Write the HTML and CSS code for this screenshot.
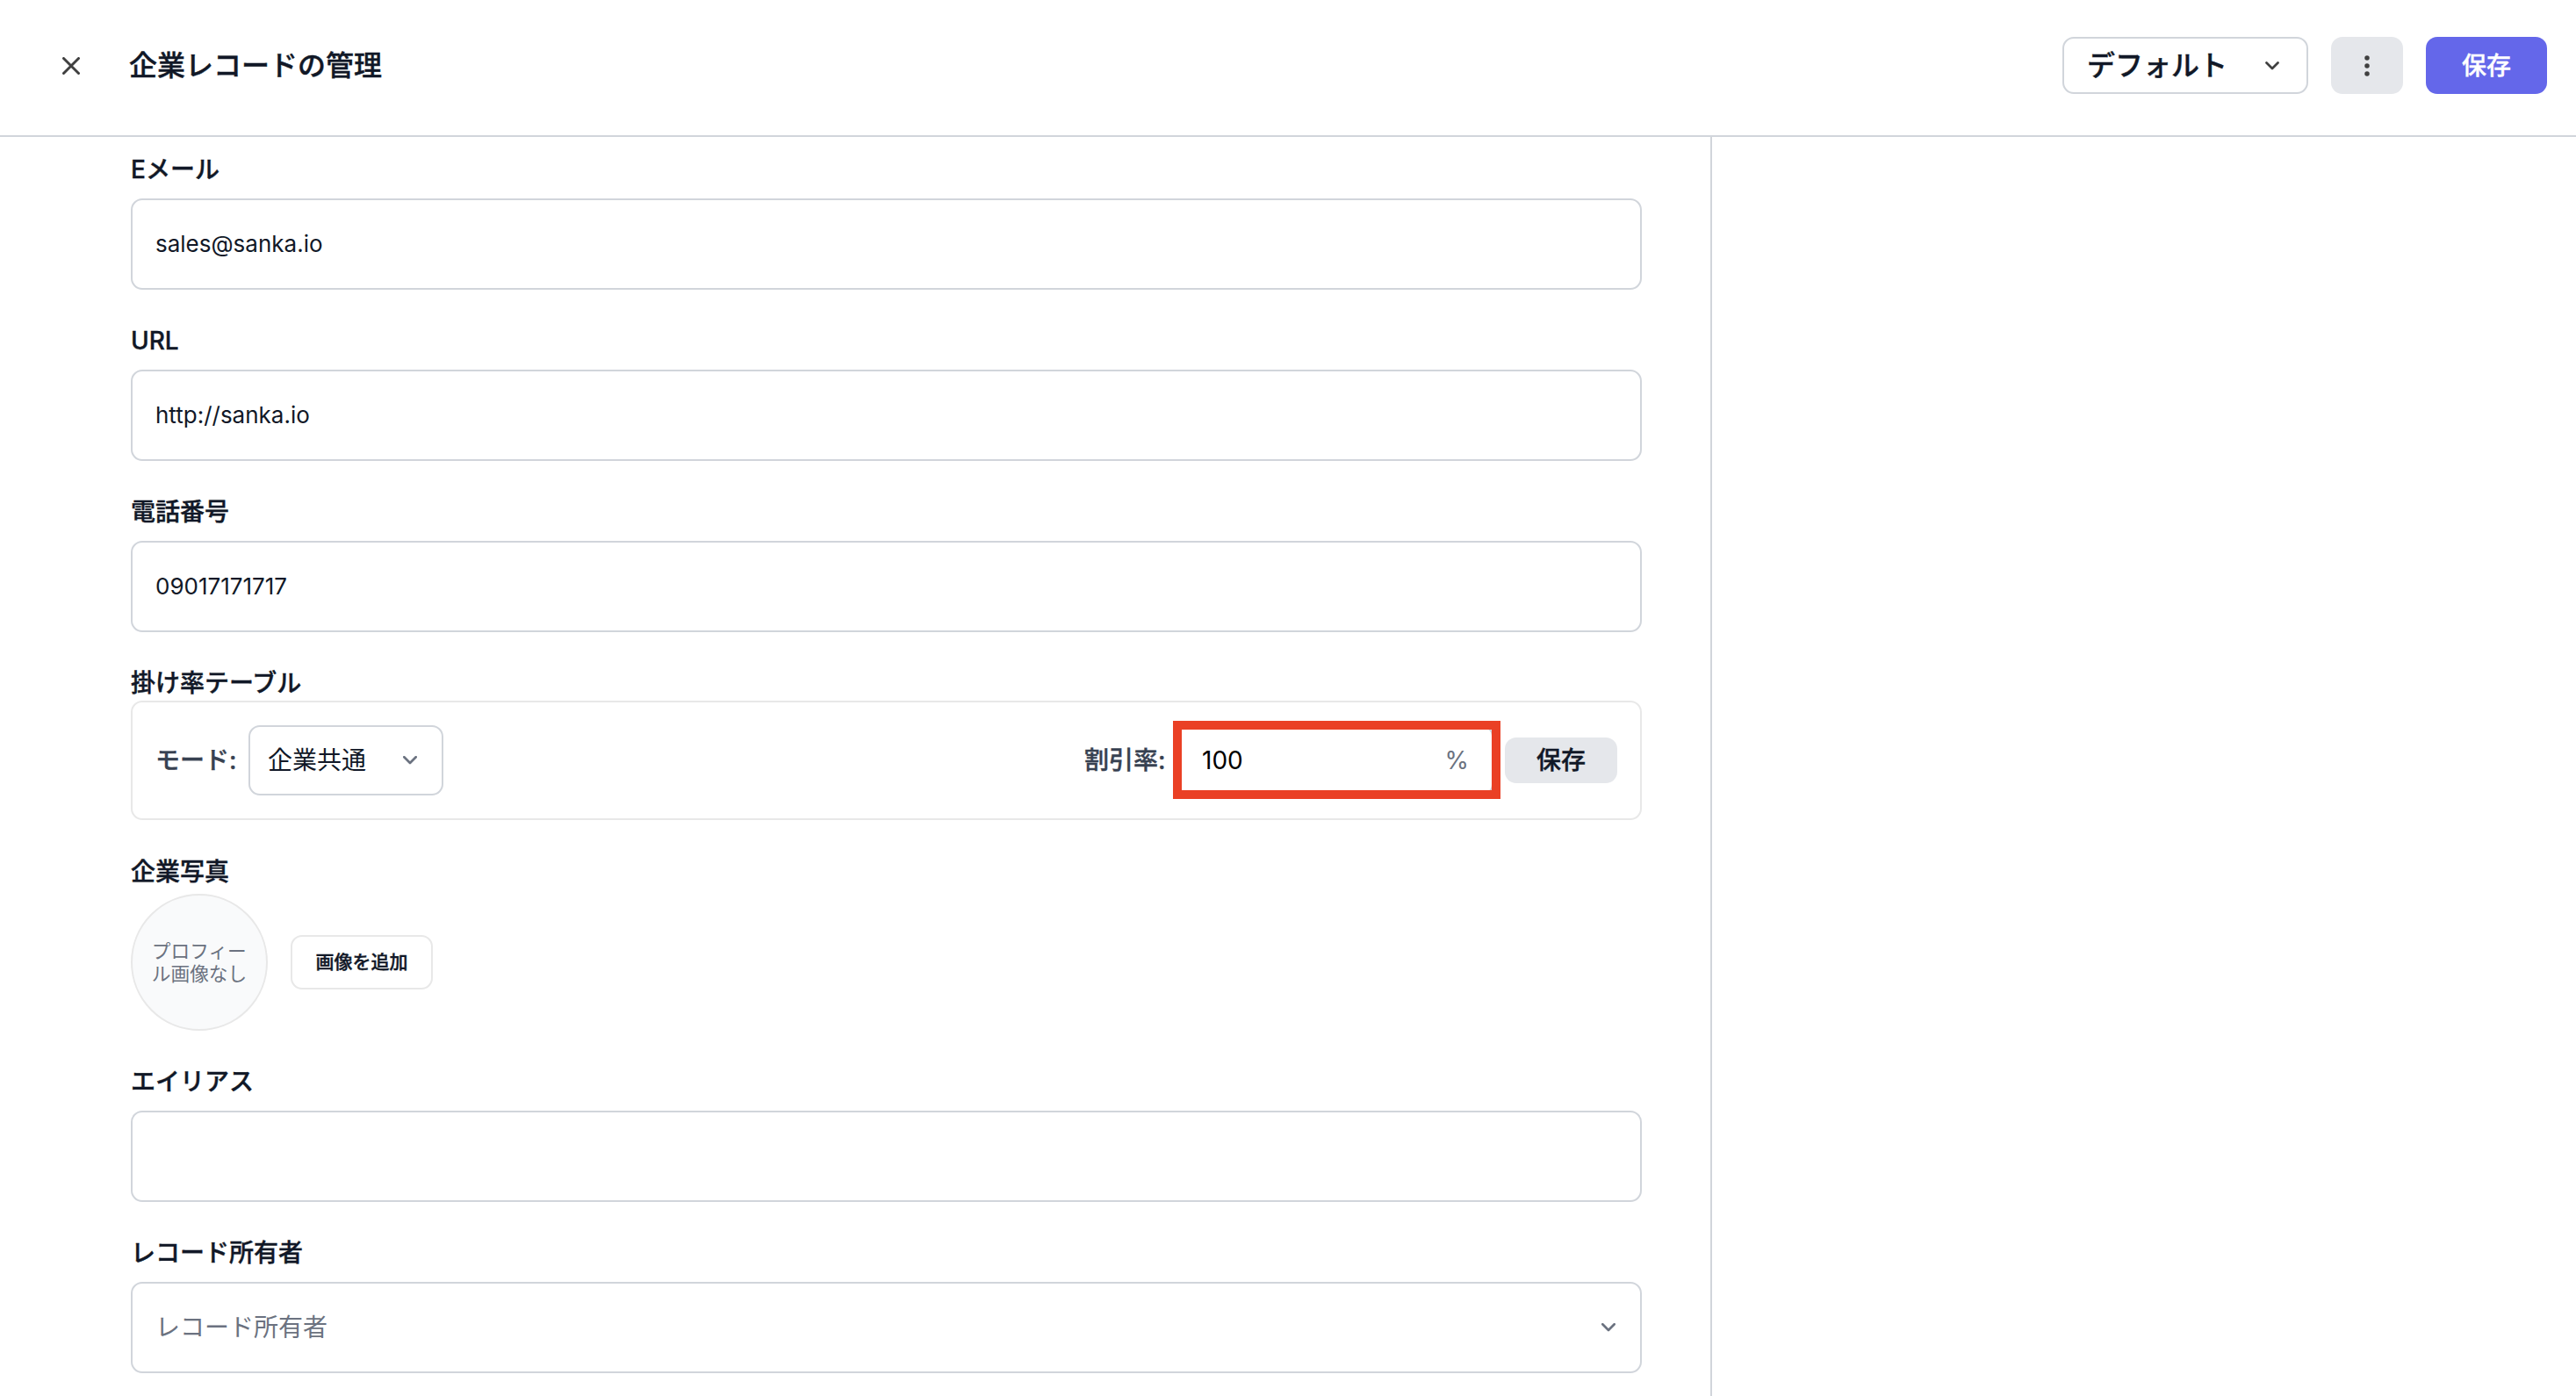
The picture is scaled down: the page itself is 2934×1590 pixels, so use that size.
FILE: index.html
```html
<!DOCTYPE html>
<html lang="ja">
<head>
<meta charset="utf-8">
<title>企業レコードの管理</title>
<link rel="stylesheet" href="styles.css">
</head>
<body>
<div class="page">
  <header class="header">
    <button class="close" aria-label="閉じる"><svg width="20" height="20" viewBox="0 0 20 20"><path d="M1.5 1.5l17 17M18.5 1.5l-17 17"/></svg></button>
    <h1 class="title">企業レコードの管理</h1>
    <div class="actions">
      <button class="view-select"><span>デフォルト</span><svg class="chevron" width="16" height="10" viewBox="0 0 16 10"><path d="M1.5 1.5L8 8l6.5-6.5"/></svg></button>
      <button class="more" aria-label="その他"><svg width="6" height="24" viewBox="0 0 6 24"><circle cx="3" cy="3" r="2.75"/><circle cx="3" cy="12" r="2.75"/><circle cx="3" cy="21" r="2.75"/></svg></button>
      <button class="save">保存</button>
    </div>
  </header>
  <div class="body">
    <main class="form">
      <section class="field"><label class="label">Eメール</label><div class="input">sales@sanka.io</div></section>
      <section class="field"><label class="label">URL</label><div class="input">http://sanka.io</div></section>
      <section class="field"><label class="label">電話番号</label><div class="input">09017171717</div></section>
      <section class="field rate">
        <label class="label">掛け率テーブル</label>
        <div class="rate-panel">
          <span class="inline-label">モード:</span>
          <div class="mode-select"><span>企業共通</span><svg class="chevron" width="16" height="10" viewBox="0 0 16 10"><path d="M1.3 1.3L8 8l6.7-6.7"/></svg></div>
          <span class="inline-label discount-label">割引率:</span>
          <div class="discount"><span>100</span><span class="percent">%</span><div class="highlight"></div></div>
          <button class="rate-save">保存</button>
        </div>
      </section>
      <section class="field photo">
        <label class="label">企業写真</label>
        <div class="photo-row"><div class="avatar">プロフィー<br>ル画像なし</div><button class="add-image">画像を追加</button></div>
      </section>
      <section class="field"><label class="label">エイリアス</label><div class="input"></div></section>
      <section class="field"><label class="label">レコード所有者</label><div class="input owner"><span>レコード所有者</span><svg class="chevron" width="16" height="10" viewBox="0 0 16 10"><path d="M1.3 1.3L8 8l6.7-6.7"/></svg></div></section>
    </main>
    <aside class="side"></aside>
  </div>
</div>
</body>
</html>
```
FILE: styles.css
```css
* { box-sizing: border-box; }
body {
  margin: 0;
  background: #fff;
  color: #111827;
  font-family: Inter, "Noto Sans CJK JP", sans-serif;
  font-size: 28px;
  line-height: 40px;
}
button { margin: 0; padding: 0; border: 0; background: none; color: inherit; font: inherit; }
svg { display: block; flex: none; fill: none; stroke: #404040; stroke-width: 2.7; stroke-linecap: round; stroke-linejoin: round; }
.title, .view-select, .save, .label, .inline-label, .rate-save, .add-image { font-weight: 500; -webkit-text-stroke: 0.4px currentColor; }
.page { display: flex; flex-direction: column; height: 1590px; overflow: hidden; }
.header {
  display: flex;
  align-items: center;
  flex: none;
  height: 156px;
  padding: 0 33px 5px 71px;
  border-bottom: 2px solid #d1d5db;
}
.close svg { stroke-width: 3; }
.title { margin: 0 0 0 56px; font-size: 32px; line-height: 48px; }
.actions { display: flex; gap: 26px; margin-left: auto; }
.view-select {
  display: flex;
  align-items: center;
  justify-content: space-between;
  width: 280px;
  height: 65px;
  padding: 0 31px 0 26px;
  border: 2px solid #d1d5db;
  border-radius: 13px;
  font-size: 32px;
}
.more { display: flex; align-items: center; justify-content: center; width: 82px; height: 65px; border-radius: 13px; background: #e5e7eb; }
.more svg { fill: #404040; stroke: none; }
.save { width: 138px; height: 65px; border-radius: 13px; background: #6467ea; color: #fff; }
.body { display: flex; flex: 1; min-height: 0; }
.form { width: 1948px; padding: 17px 78px 0 149px; }
.side { flex: 1; border-left: 2px solid #d1d5db; }
.field { height: 195px; }
.label { display: block; height: 53px; line-height: 40px; }
.input {
  display: flex;
  align-items: center;
  height: 104px;
  padding: 0 26px;
  border: 2px solid #d1d5db;
  border-radius: 13px;
  font-size: 26px;
}
.rate { height: 215px; }
.rate .label { height: 40px; }
.rate-panel {
  display: flex;
  align-items: center;
  height: 136px;
  padding: 0 26px;
  border: 2px solid #e8e8e8;
  border-radius: 13px;
}
.inline-label { width: 106px; color: #374151; white-space: nowrap; }
.mode-select {
  display: flex;
  align-items: center;
  justify-content: space-between;
  width: 222px;
  height: 80px;
  padding: 0 28px 0 20px;
  border: 2px solid #d1d5db;
  border-radius: 13px;
}
.mode-select .chevron, .owner .chevron { stroke: #6b7280; }
.discount-label { width: 105px; margin-left: auto; }
.discount {
  position: relative;
  display: flex;
  align-items: center;
  justify-content: space-between;
  width: 361px;
  height: 80px;
  margin-right: 13px;
  padding: 0 26px 0 27px;
  border: 2px solid #d1d5db;
  border-radius: 13px;
  color: #000;
}
.percent { color: #6b7280; }
.highlight { position: absolute; top: -7px; left: -6px; width: 373px; height: 89px; border: 10px solid #ea4025; }
.rate-save { width: 128px; height: 52px; border-radius: 13px; background: #e5e7eb; }
.photo { height: 239px; }
.photo .label { height: 45px; }
.photo-row { display: flex; align-items: center; gap: 26px; }
.avatar {
  display: flex;
  align-items: center;
  justify-content: center;
  width: 156px;
  height: 156px;
  border: 2px solid #e8e8e8;
  border-radius: 50%;
  background: #f9fafb;
  color: #6b7280;
  font-size: 21.7px;
  line-height: 26px;
  white-space: nowrap;
}
.add-image { width: 162px; height: 62px; border: 2px solid #e8e8e8; border-radius: 13px; font-size: 21px; }
.owner { justify-content: space-between; padding-right: 28px; color: #6b7280; font-size: 28px; }
```
